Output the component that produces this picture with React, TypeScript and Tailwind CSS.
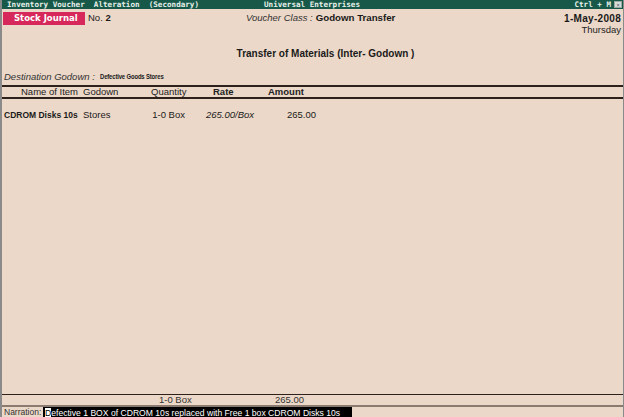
export default function App() {
  return (
    <div className="flex h-[417px] w-[624px] flex-col border-l-2 border-r border-[#8a8a8a] bg-[#ecd8c8] font-['Liberation_Sans',Arial,sans-serif] text-[9.5px] text-[#1a1a1a]">
      {/* title bar */}
      <div className="flex h-[9px] items-center bg-[#175848] pl-[5px] font-['DejaVu_Sans_Mono',monospace] text-[7.6px] font-bold leading-none text-[#e6f0ea]">
        <span className="w-[257px] whitespace-pre">Inventory Voucher  Alteration  (Secondary)</span>
        <span className="flex-1">Universal Enterprises</span>
        <span className="pr-[3px]">Ctrl + M</span>
        <span className="mr-[1px] flex h-[7px] w-[8px] items-center justify-center border border-[#9aa7a2] bg-[#d5ddd9] text-[6px] font-normal text-[#556]">
          ×
        </span>
      </div>

      {/* voucher header */}
      <div className="mt-[3px] flex h-[13px] items-center">
        <div className="ml-[1px] flex h-[13px] w-[82px] items-center bg-[#d6285a] pl-[11px] font-['DejaVu_Sans',sans-serif] text-[8.5px] font-bold text-white">
          Stock Journal
        </div>
        <span className="ml-[3px] w-[158px]">
          No. <b>2</b>
        </span>
        <span className="italic text-[#333]">Voucher Class :</span>
        <span className="ml-[3px] flex-1 text-[9.7px] font-bold">Godown Transfer</span>
        <span className="pr-[2px] text-[10px] font-bold tracking-[0.3px]">1-May-2008</span>
      </div>
      <div className="flex h-[11px] items-center justify-end pr-[2px] text-[#222]">Thursday</div>

      <div className="mt-[10px] flex h-[14px] items-center justify-center pl-[26px] text-[10px] font-bold">
        Transfer of Materials (Inter- Godown )
      </div>

      <div className="mt-[11px] flex h-[12px] items-center pl-[2px]">
        <span className="italic text-[#333]">Destination Godown :</span>
        <span className="ml-[5px] origin-left scale-x-[0.74] whitespace-nowrap text-[8px] font-bold tracking-tight">
          Defective Goods Stores
        </span>
      </div>

      {/* column header */}
      <div className="mt-[2px] flex h-[14px] items-center border-y-2 border-[#2e211b] text-[#222]">
        <span className="w-[81px] pl-[19px]">Name of Item</span>
        <span className="w-[68px]">Godown</span>
        <span className="w-[62px]">Quantity</span>
        <span className="w-[55px] font-bold">Rate</span>
        <span className="font-bold">Amount</span>
      </div>

      {/* rows */}
      <div className="flex-1 pt-[10px]">
        <div className="flex h-[12px] items-center">
          <span className="w-[81px] pl-[2px] text-[8.5px] font-bold">CDROM Disks 10s</span>
          <span className="w-[50px]">Stores</span>
          <span className="w-[52px] text-right">1-0 Box</span>
          <span className="ml-[21px] w-[56px] italic">265.00/Box</span>
          <span className="w-[54px] text-right">265.00</span>
        </div>
      </div>

      {/* totals */}
      <div className="flex h-[11px] items-center border-t border-[#2e211b] text-[#333]">
        <span className="w-[157px]" />
        <span className="w-[116px]">1-0 Box</span>
        <span>265.00</span>
      </div>

      {/* narration */}
      <div className="flex h-[12px] items-center border-t-2 border-[#8a7a70]">
        <span className="w-[41px] pl-[2px] text-[8.5px] text-[#333]">Narration:</span>
        <span className="block h-full w-[309px] overflow-hidden whitespace-nowrap bg-black pl-[2px] text-[8.6px] leading-[12px] text-white">
          <span className="bg-white text-black">D</span>efective 1 BOX of CDROM 10s replaced with Free 1 box CDROM Disks 10s
        </span>
      </div>
    </div>
  );
}
